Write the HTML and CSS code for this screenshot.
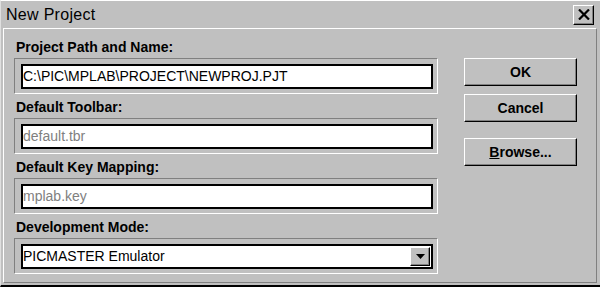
FILE: index.html
```html
<!DOCTYPE html>
<html lang="en">
<head>
    <meta charset="UTF-8">
    <title>New Project</title>
    <link rel="stylesheet" href="styles.css">
</head>
<body>
    <div class="dialog">
        <div class="titlebar">
            <span class="title">New Project</span>
            <button class="close" aria-label="Close">
                <svg width="12" height="11" viewBox="0 0 12 11"><path d="M1 0.5 L11 10.5 M11 0.5 L1 10.5" stroke="#000" stroke-width="2.2"/></svg>
            </button>
        </div>
        <div class="panel">
            <div class="fields">
                <div class="field">
                    <div class="label">Project Path and Name:</div>
                    <div class="frame"><div class="input">C:\PIC\MPLAB\PROJECT\NEWPROJ.PJT</div></div>
                </div>
                <div class="field">
                    <div class="label">Default Toolbar:</div>
                    <div class="frame"><div class="input disabled">default.tbr</div></div>
                </div>
                <div class="field">
                    <div class="label">Default Key Mapping:</div>
                    <div class="frame"><div class="input disabled">mplab.key</div></div>
                </div>
                <div class="field">
                    <div class="label">Development Mode:</div>
                    <div class="frame">
                        <div class="input select">
                            <span>PICMASTER Emulator</span>
                            <span class="drop"><svg width="9" height="5" viewBox="0 0 9 5"><polygon points="0,0 9,0 4.5,5" fill="#000"/></svg></span>
                        </div>
                    </div>
                </div>
            </div>
            <div class="buttons">
                <button class="btn">OK</button>
                <button class="btn">Cancel</button>
                <button class="btn browse"><u>B</u>rowse...</button>
            </div>
        </div>
    </div>
</body>
</html>
```

FILE: styles.css
```css
body { margin: 0; padding: 0; background: #c0c0c0; font-family: "Liberation Sans", Arial, sans-serif; }
.dialog { width: 600px; height: 287px; box-sizing: border-box; display: flex; flex-direction: column; background: #c0c0c0; border-top: 1px solid #fff; border-left: 1px solid #dfdfdf; border-bottom: 2px solid #000; }
.titlebar { height: 27px; flex: none; display: flex; align-items: center; justify-content: space-between; padding: 0 6px 0 5px; }
.title { font-size: 16px; letter-spacing: 0.3px; color: #000; }
.close { width: 21px; height: 20px; padding: 0; display: flex; align-items: center; justify-content: center; background: #c0c0c0; border: 1px solid; border-color: #fff #000 #000 #fff; box-shadow: inset -1px -1px #808080; }
.panel { flex: 1; display: flex; margin: 0 3px 2px 2px; padding: 10px 0 0 10px; border: 1px solid; border-color: #fff #808080 #808080 #fff; }
.fields { width: 424px; }
.field + .field { margin-top: 5px; }
.label { font-size: 14px; font-weight: bold; line-height: 16px; padding-left: 2px; margin-bottom: 3px; color: #000; }
.frame { border: 1px solid; border-color: #808080 #fff #fff #808080; padding: 5px 4px 4px 6px; }
.input { height: 25px; box-sizing: border-box; border: 2px solid #000; background: #fff; font-size: 14px; line-height: 21px; color: #000; white-space: nowrap; }
.input.disabled { color: #808080; }
.input.select { display: flex; align-items: center; justify-content: space-between; }
.drop { width: 20px; height: 19px; margin-right: 1px; box-sizing: border-box; display: flex; align-items: center; justify-content: center; background: #c0c0c0; border: 1px solid; border-color: #fff #000 #000 #fff; box-shadow: inset -1px -1px #808080; }
.buttons { width: 113px; margin-left: 26px; padding-top: 19px; display: flex; flex-direction: column; }
.btn { height: 28px; padding: 0; background: #c0c0c0; font-family: "Liberation Sans", Arial, sans-serif; font-size: 14px; font-weight: bold; color: #000; border: 1px solid; border-color: #fff #000 #000 #fff; box-shadow: inset -1px -1px #808080; }
.btn + .btn { margin-top: 8px; }
.btn.browse { margin-top: 16px; }
```
